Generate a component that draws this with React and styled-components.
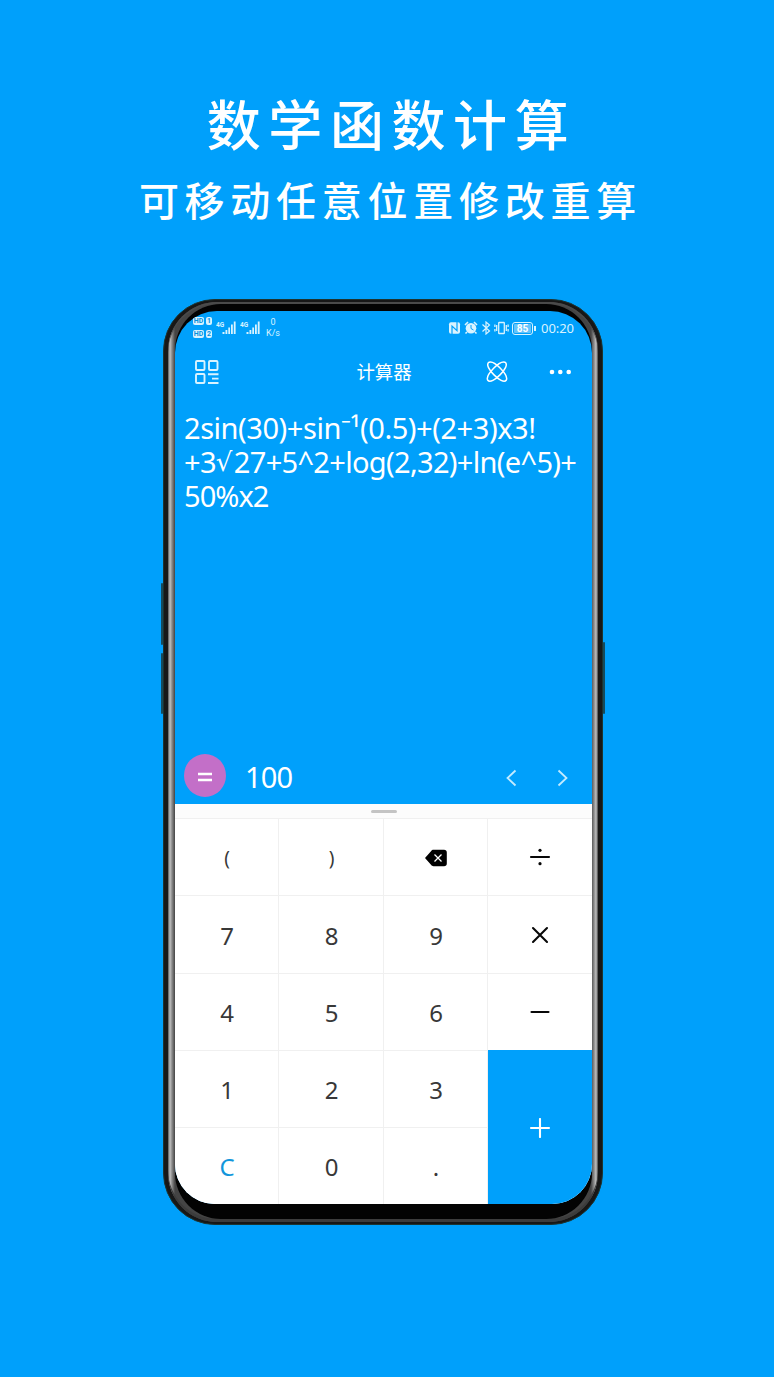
import React from "react";
import styled, { createGlobalStyle } from "styled-components";

const BLUE = "#00a0fb";
const PALE = "#d9f3ff";

const Global = createGlobalStyle`
  * { box-sizing: border-box; }
  body { margin: 0; background: ${BLUE}; font-family: "Noto Sans", "Noto Sans CJK SC", sans-serif; }
  svg { display: block; flex: none; }
`;

const Page = styled.main`
  width: 774px;
  height: 1377px;
  overflow: hidden;
  background: ${BLUE};
  color: #fff;
  display: flex;
  flex-direction: column;
  align-items: center;
`;

const Title = styled.h1`
  margin: 90px 0 0;
  padding-left: 9px;
  height: 66px;
  font: 500 54px/66px "Noto Sans CJK SC", sans-serif;
  letter-spacing: 7.6px;
  white-space: nowrap;
`;

const Subtitle = styled.h2`
  margin: 17px 0 0;
  padding-left: 7px;
  height: 52px;
  font: 500 40px/52px "Noto Sans CJK SC", sans-serif;
  letter-spacing: 5.75px;
  white-space: nowrap;
`;

const Phone = styled.section`
  position: relative;
  width: 440px;
  height: 926px;
  margin: 74px 8px 0 0;
  padding: 2px 4px;
  border-radius: 52px;
  background: #171717;
  border: 1px solid #1d3430;
`;

const SideKey = styled.i`
  position: absolute;
  width: 2px;
  border-radius: 1px;
  background: #164a5c;
  left: ${(p) => (p.$right ? "auto" : "-3px")};
  right: ${(p) => (p.$right ? "-3px" : "auto")};
  top: ${(p) => p.$top}px;
  height: ${(p) => p.$height}px;
`;

const Rim = styled.div`
  height: 100%;
  padding: 2px 6px 3px 7px;
  border-radius: 49px;
  background: linear-gradient(90deg, #555 0, #c2c2c2 2px, #8a8a8a 4px, #444 7px, #444 423px, #8a8a8a 426px, #c0c0c0 428px, #444 430px);
  box-shadow: inset 0 2px 0 #4a4a4a, inset 0 -3px 0 #3c3c3c;
`;

const Bezel = styled.div`
  height: 100%;
  padding: 7px 0 15px;
  border-radius: 46px;
  background: #030303;
`;

const Screen = styled.div`
  height: 100%;
  overflow: hidden;
  border-radius: 42px 42px 40px 40px;
  background: ${BLUE};
  display: flex;
  flex-direction: column;
`;

const StatusBar = styled.div`
  height: 36px;
  flex: none;
  display: flex;
  align-items: flex-start;
  justify-content: space-between;
  padding: 4px 18px 0 18px;
  color: ${PALE};
`;

const NetworkStatus = styled.div`
  display: flex;
  align-items: flex-start;
  gap: 4px;
`;

const SystemStatus = styled.div`
  display: flex;
  align-items: center;
  gap: 3px;
  padding-top: 4px;
`;

const SimColumn = styled.div`
  display: flex;
  flex-direction: column;
  gap: 5px;
  padding-top: 2px;
`;

const SimRow = styled.div`
  display: flex;
  gap: 2px;
`;

const Tag = styled.span`
  width: ${(p) => p.$w}px;
  height: 8px;
  border-radius: 2px;
  background: ${PALE};
  color: #0791dc;
  font: 700 7px/8px Roboto, sans-serif;
  text-align: center;
`;

const SignalRow = styled.div`
  display: flex;
  gap: 4px;
  padding-top: 5px;
`;

const Speed = styled.div`
  width: 18px;
  font: 400 9px/11px Roboto, sans-serif;
  text-align: center;
  padding-top: 2px;
`;

const Battery = styled.span`
  position: relative;
  width: 21px;
  height: 13px;
  margin-right: 3px;
  border: 1px solid ${PALE};
  border-radius: 3px;
  padding: 1px;
  display: flex;
  &::after {
    content: "";
    position: absolute;
    right: -4px;
    top: 3px;
    width: 2px;
    height: 5px;
    background: ${PALE};
  }
`;

const Charge = styled.b`
  flex: 1;
  border-radius: 1px;
  background: #63c3fb;
  color: #fff;
  font: 700 10px/9px Roboto, sans-serif;
  text-align: center;
`;

const Clock = styled.time`
  margin-left: 2px;
  font-size: 13px;
  line-height: 18px;
  letter-spacing: -0.05px;
`;

const AppBar = styled.header`
  height: 49px;
  flex: none;
  display: grid;
  grid-template-columns: 1fr auto 1fr;
  align-items: center;
  padding: 0 19px 0 20px;
`;

const AppTitle = styled.h3`
  margin: 0 0 1px;
  font: 400 18.4px/26px "Noto Sans CJK SC", sans-serif;
`;

const Actions = styled.div`
  display: flex;
  align-items: center;
  justify-content: flex-end;
  gap: 41px;
`;

const Expression = styled.div`
  flex: 1;
  padding: 15px 0 0 9px;
  font-size: 29px;
  line-height: 34px;
`;

const Line = styled.div`
  height: 34px;
  display: flex;
  white-space: nowrap;
  letter-spacing: ${(p) => p.$track}px;
`;

const Root = styled.span`
  width: 18px;
  font-family: "DejaVu Sans", sans-serif;
  font-size: 26px;
  letter-spacing: 0;
`;

const ResultRow = styled.div`
  height: 56px;
  flex: none;
  display: flex;
  align-items: center;
  padding: 0 24px 0 9px;
`;

const Equals = styled.button`
  width: 42px;
  height: 43px;
  margin-bottom: 1px;
  padding: 0;
  border: 0;
  border-radius: 50%;
  background: #c36fc8;
  display: grid;
  place-items: center;
`;

const Result = styled.output`
  flex: 1;
  margin-left: 19px;
  padding-top: 1px;
  font-size: 29px;
  line-height: 34px;
  letter-spacing: -0.9px;
`;

const Pager = styled.div`
  display: flex;
  gap: 40px;
  padding-top: 3px;
`;

const Handle = styled.div`
  height: 14px;
  flex: none;
  background: #fcfcfc;
  padding-top: 6px;
  &::before {
    content: "";
    display: block;
    width: 26px;
    height: 3px;
    margin: 0 auto;
    border-radius: 2px;
    background: #c4c4c4;
  }
`;

const Keypad = styled.div`
  height: 386px;
  flex: none;
  display: grid;
  grid-template-columns: 104px 105px 104px 1fr;
  grid-template-rows: 77px 78px 77px 77px 1fr;
  background: #fff;
`;

const Key = styled.button`
  margin: 0;
  padding: 2px 0 0 1px;
  border: 0 solid #f0f0f0;
  border-width: 1px 1px 0 0;
  background: #fff;
  color: ${(p) => (p.$accent ? "#1296db" : "#383838")};
  font-family: inherit;
  font-size: ${(p) => (p.$small ? 19 : 24)}px;
  line-height: 34px;
  display: flex;
  align-items: center;
  justify-content: center;
`;

const OperatorKey = styled(Key)`
  padding: 0;
  border-right-width: 0;
  color: #080808;
`;

const PlusKey = styled(OperatorKey)`
  grid-column: 4;
  grid-row: 4 / 6;
  border: 0;
  padding-top: 2px;
  background: ${BLUE};
  color: #fff;
`;

const Signal = () => (
  <svg width="20" height="16" viewBox="0 0 20 16" fill={PALE}>
    <text x="0" y="6.5" fontFamily="Roboto" fontSize="6.5" fontWeight="700">4G</text>
    <path d="M6.5 12h2v2h-2zM9.5 10h1.8v4H9.5zM12.3 7.5H14V14h-1.7zM15 4.5h1.8V14H15zM17.8 1.5h1.8V14h-1.8z" />
  </svg>
);

const Nfc = () => (
  <svg width="13" height="14" viewBox="0 0 13 14">
    <rect x="1" y="1.2" width="11" height="11.6" rx="2" fill={PALE} />
    <path d="M4 13V5l5 4.600V1" fill="none" stroke={BLUE} strokeWidth="1.2" />
  </svg>
);

const Alarm = () => (
  <svg width="14" height="14" viewBox="0 0 14 14">
    <circle cx="7" cy="7.2" r="5.3" fill={PALE} />
    <path d="M1 4 4 1M10 1l3 3M3 11l-1.5 1.5M11 11l1.5 1.5" stroke={PALE} strokeWidth="1.6" />
    <path d="M7 4v3.500l2.500 1.500" stroke={BLUE} fill="none" />
  </svg>
);

const Bluetooth = () => (
  <svg width="10" height="14" viewBox="0 0 10 14" fill="none" stroke={PALE} strokeWidth="1.2">
    <path d="m1.5 3.5 7 6.5L5 13V1l3.5 3-7 6.5" />
  </svg>
);

const Vibrate = () => (
  <svg width="15" height="14" viewBox="0 0 15 14" fill="none" stroke={PALE} strokeWidth="1.3">
    <rect x="4.7" y="1.5" width="5.6" height="11" rx=".6" />
    <path d="M2.7 4v6M12.3 4v6M.9 3.5V6M.9 8v2.5M14.1 3.5V6M14.1 8v2.5" />
  </svg>
);

const GridIcon = () => (
  <svg width="24" height="24" viewBox="0 0 24 24" fill="none" stroke={PALE} strokeWidth="1.9">
    <rect x="1" y="1" width="8.5" height="9" rx="1" />
    <rect x="14" y="1" width="8.5" height="9" rx="1" />
    <rect x="1" y="14" width="8.5" height="9" rx="1" />
    <path d="M13 14.2h10.5M17 18.6h6.5M13 23h10.5" />
  </svg>
);

const Atom = () => (
  <svg width="22" height="22" viewBox="0 0 22 22" fill="none" stroke="#fff" strokeWidth="1.5">
    <path d="M3.1 1.2c2.900-1.200 7.200 2 11 5.900 4.500 4.600 7.900 9.400 6.100 12.200-2 2.900-7.500-.7-12.200-5.400C3.500 9.300-.5 3.200 3.100 1.200z" />
    <path d="M18.900 1.200c-2.900-1.200-7.200 2-11 5.900-4.500 4.600-7.900 9.400-6.100 12.200 2 2.900 7.500-.7 12.200-5.400C18.500 9.300 22.500 3.200 18.900 1.200z" />
  </svg>
);

const More = () => (
  <svg width="24" height="6" viewBox="0 0 24 6" fill="#fff">
    <circle cx="3" cy="3" r="2.3" />
    <circle cx="11.3" cy="3" r="2.3" />
    <circle cx="19.7" cy="3" r="2.3" />
  </svg>
);

const Chevron = ({ next }) => (
  <svg width="11" height="18" viewBox="0 0 11 18" fill="none" stroke="#c2ebff" strokeWidth="1.8">
    <path d={next ? "m1.5 1.5 8 7.5-8 7.5" : "M9.5 1.5 1.5 9l8 7.5"} />
  </svg>
);

const EqualsMark = () => (
  <svg width="16" height="12" viewBox="0 0 16 12" stroke="#fff" strokeWidth="2.6">
    <path d="M1 4h14M1 10h14" />
  </svg>
);

const Backspace = () => (
  <svg width="24" height="18" viewBox="0 0 24 18">
    <path d="M1 9 7 2.2C7.8 1.2 8.5.8 9.5.8H20c1.8 0 2.8 1 2.8 2.8v10.8c0 1.8-1 2.8-2.8 2.8H9.5c-1 0-1.7-.4-2.5-1.4z" fill="#000" />
    <path d="m10.5 5.5 7 7m0-7-7 7" stroke="#fff" strokeWidth="1.3" />
  </svg>
);

const marks = {
  divide: (
    <>
      <path d="M2 10h18" />
      <circle cx="11" cy="3.3" r="1.6" fill="currentColor" stroke="none" />
      <circle cx="11" cy="16.7" r="1.6" fill="currentColor" stroke="none" />
    </>
  ),
  times: <path d="m4 3 14 14m0-14L4 17" />,
  minus: <path d="M2.500 10h17" />,
  plus: <path d="M2 10h18M11 1v18" />,
};

const Mark = ({ name }) => (
  <svg width="22" height="20" viewBox="0 0 22 20" fill="none" stroke="currentColor" strokeWidth="2.1" strokeLinecap="round">
    {marks[name]}
  </svg>
);

export default function App() {
  return (
    <Page>
      <Global />
      <Title>数学函数计算</Title>
      <Subtitle>可移动任意位置修改重算</Subtitle>
      <Phone>
        <SideKey $top={283} $height={62} />
        <SideKey $top={353} $height={61} />
        <SideKey $right $top={342} $height={72} />
        <Rim>
          <Bezel>
            <Screen>
              <StatusBar>
                <NetworkStatus>
                  <SimColumn>
                    <SimRow><Tag $w={11}>HD</Tag><Tag $w={6}>1</Tag></SimRow>
                    <SimRow><Tag $w={11}>HD</Tag><Tag $w={6}>2</Tag></SimRow>
                  </SimColumn>
                  <SignalRow><Signal /><Signal /></SignalRow>
                  <Speed>0<br />K/s</Speed>
                </NetworkStatus>
                <SystemStatus>
                  <Nfc /><Alarm /><Bluetooth /><Vibrate />
                  <Battery><Charge>85</Charge></Battery>
                  <Clock>00:20</Clock>
                </SystemStatus>
              </StatusBar>
              <AppBar>
                <GridIcon />
                <AppTitle>计算器</AppTitle>
                <Actions><Atom /><More /></Actions>
              </AppBar>
              <Expression>
                <Line $track={-0.45}>2sin(30)+sin⁻¹(0.5)+(2+3)x3!</Line>
                <Line $track={-0.68}>+3<Root>√</Root>27+5^2+log(2,32)+ln(e^5)+</Line>
                <Line $track={-0.95}>50%x2</Line>
              </Expression>
              <ResultRow>
                <Equals><EqualsMark /></Equals>
                <Result>100</Result>
                <Pager><Chevron /><Chevron next /></Pager>
              </ResultRow>
              <Handle />
              <Keypad>
                <Key $small>(</Key><Key $small>)</Key><Key><Backspace /></Key>
                <OperatorKey><Mark name="divide" /></OperatorKey>
                <Key>7</Key><Key>8</Key><Key>9</Key>
                <OperatorKey><Mark name="times" /></OperatorKey>
                <Key>4</Key><Key>5</Key><Key>6</Key>
                <OperatorKey><Mark name="minus" /></OperatorKey>
                <Key>1</Key><Key>2</Key><Key>3</Key>
                <PlusKey><Mark name="plus" /></PlusKey>
                <Key $accent>C</Key><Key>0</Key><Key>.</Key>
              </Keypad>
            </Screen>
          </Bezel>
        </Rim>
      </Phone>
    </Page>
  );
}
